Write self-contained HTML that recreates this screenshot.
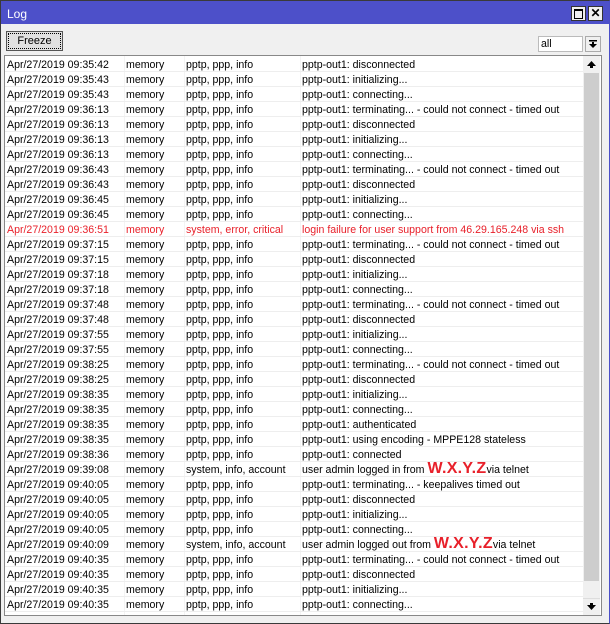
<!DOCTYPE html>
<html><head><style>
body{margin:0;width:610px;height:624px;overflow:hidden;background:#f0f0f0;font-family:"Liberation Sans",sans-serif;font-size:10.6px;position:relative}
.win{position:absolute;left:0;top:0;width:608px;height:622px;border:1px solid #3a3a3a;border-right-color:#4b4fc8;background:#f0f0f0}
.title{position:absolute;left:0;top:0;width:608px;height:23px;background:#4d50c9;color:#fff;font-size:12px}
.title span{position:absolute;left:6px;top:6px}
.tb{position:absolute;top:5px;width:13px;height:13px;background:#f0f0f0;border:1px solid #333}
.btn{position:absolute;left:5px;top:30px;width:57px;height:20px;border:1px solid #555;background:#e1e1e1;box-sizing:border-box;text-align:center;line-height:19px;font-size:11px}
.btn i{position:absolute;left:1px;top:1px;right:1px;bottom:1px;border:1px dotted #000}
.sel{position:absolute;left:537px;top:35px;width:45px;height:16px;background:#fff;border:1px solid #bbb;box-sizing:border-box;padding-left:2px;line-height:14px}
.dd{position:absolute;left:584px;top:35px;width:16px;height:16px;border:1px solid #aaa;box-sizing:border-box;background:#f0f0f0}
.list{position:absolute;left:4px;top:55px;width:598px;height:561px;border:1px solid #888;background:#fff;box-sizing:border-box;overflow:hidden}
.r{position:absolute;left:0;width:578px;height:15px;border-bottom:1px solid #eeeeee;box-sizing:border-box;line-height:16px;white-space:nowrap}
.r span{position:absolute;top:0}
.c1{left:2px}.c2{left:121px}.c3{left:181px}.c4{left:297px}
.vl{position:absolute;top:0;width:1px;height:561px;background:#f4f4f4}
.red{color:#e8202a}
.big{color:#e8202a;font-weight:bold;font-size:16px;line-height:12px;letter-spacing:.3px}
.sb{position:absolute;left:578px;top:0;width:17px;height:559px;background:#f0f0f0}
</style></head><body>
<div class="win">
<div class="title"><span>Log</span>
<div class="tb" style="left:570px"><div style="position:absolute;left:2px;top:2px;width:7px;height:7px;border:1px solid #000;border-top-width:2px"></div></div>
<div class="tb" style="left:587px;text-align:center;line-height:13px;color:#000;font-weight:bold;font-size:12px">✕</div>
</div>
<div class="btn"><i></i>Freeze</div>
<div class="sel"><span style="color:#000">all</span></div>
<div class="dd"><svg width="14" height="14" style="position:absolute;left:0;top:0"><rect x="3" y="3" width="8" height="1.5" fill="#000"/><polygon points="3,7 11,7 7,11" fill="#000"/><rect x="6" y="5" width="2" height="2" fill="#000"/></svg></div>
</div>
<div class="list" id="l">
<div class="vl" style="left:119px"></div><div class="vl" style="left:179px"></div><div class="vl" style="left:295px"></div>
<div class="sb">
<div style="position:absolute;left:0;top:0;width:17px;height:17px"><svg width="17" height="17"><polygon points="4,10 13,10 8.5,5" fill="#000"/><rect x="7" y="10" width="3" height="2" fill="#000"/></svg></div>
<div style="position:absolute;left:1px;top:17px;width:15px;height:508px;background:#cdcdcd"></div>
<div style="position:absolute;left:0;top:542px;width:17px;height:17px;border-top:1px solid #ddd"><svg width="17" height="17"><polygon points="4,6 13,6 8.5,11" fill="#000"/><rect x="7" y="4" width="3" height="2" fill="#000"/></svg></div>
</div>
<script>
var P="pptp, ppp, info",rows=[
["09:35:42","pptp-out1: disconnected"],["09:35:43","pptp-out1: initializing..."],["09:35:43","pptp-out1: connecting..."],
["09:36:13","pptp-out1: terminating... - could not connect - timed out"],["09:36:13","pptp-out1: disconnected"],["09:36:13","pptp-out1: initializing..."],["09:36:13","pptp-out1: connecting..."],
["09:36:43","pptp-out1: terminating... - could not connect - timed out"],["09:36:43","pptp-out1: disconnected"],["09:36:45","pptp-out1: initializing..."],["09:36:45","pptp-out1: connecting..."],
["09:36:51","login failure for user support from 46.29.165.248 via ssh","system, error, critical",1],
["09:37:15","pptp-out1: terminating... - could not connect - timed out"],["09:37:15","pptp-out1: disconnected"],["09:37:18","pptp-out1: initializing..."],["09:37:18","pptp-out1: connecting..."],
["09:37:48","pptp-out1: terminating... - could not connect - timed out"],["09:37:48","pptp-out1: disconnected"],["09:37:55","pptp-out1: initializing..."],["09:37:55","pptp-out1: connecting..."],
["09:38:25","pptp-out1: terminating... - could not connect - timed out"],["09:38:25","pptp-out1: disconnected"],["09:38:35","pptp-out1: initializing..."],["09:38:35","pptp-out1: connecting..."],
["09:38:35","pptp-out1: authenticated"],["09:38:35","pptp-out1: using encoding - MPPE128 stateless"],["09:38:36","pptp-out1: connected"],
["09:39:08","user admin logged in from <b class=big>W.X.Y.Z</b>via telnet","system, info, account"],
["09:40:05","pptp-out1: terminating... - keepalives timed out"],["09:40:05","pptp-out1: disconnected"],["09:40:05","pptp-out1: initializing..."],["09:40:05","pptp-out1: connecting..."],
["09:40:09","user admin logged out from <b class=big>W.X.Y.Z</b>via telnet","system, info, account"],
["09:40:35","pptp-out1: terminating... - could not connect - timed out"],["09:40:35","pptp-out1: disconnected"],["09:40:35","pptp-out1: initializing..."],["09:40:35","pptp-out1: connecting..."]];
var h="";rows.forEach(function(r,i){h+='<div class="r'+(r[3]?' red':'')+'" style="top:'+(i*15+1)+'px"><span class="c1">Apr/27/2019 '+r[0]+'</span><span class="c2">memory</span><span class="c3">'+(r[2]||P)+'</span><span class="c4">'+r[1]+'</span></div>';});
document.write(h);
</script>
</div>
</body></html>
